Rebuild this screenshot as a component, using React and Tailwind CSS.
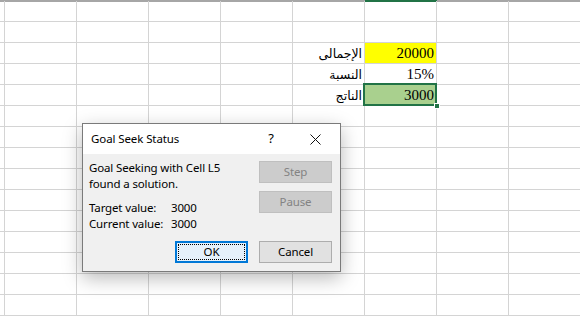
import React from 'react'

const ROWS = 15
const COLS = 9

const CELLS = {
  '2-5': { text: 'الإجمالى', kind: 'label' },
  '2-6': { text: '20000', kind: 'value', bg: 'bg-[#ffff00]' },
  '3-5': { text: 'النسبة', kind: 'label' },
  '3-6': { text: '15%', kind: 'value' },
  '4-5': { text: 'الناتج', kind: 'label' },
  '4-6': { text: '3000', kind: 'value', bg: 'bg-[#a9d08e]', selected: true },
}

function Cell({ r, c }) {
  const cell = CELLS[`${r}-${c}`]
  if (!cell) return <div className="border-r border-b border-[#d4d4d4]" />
  return (
    <div
      className={`relative flex items-center justify-end border-r border-b border-[#d4d4d4] pr-[2px] ${cell.bg || ''}`}
    >
      {cell.kind === 'label' ? (
        <span dir="rtl" className="font-['DejaVu_Sans',sans-serif] text-[12.5px] leading-[21px] text-black">{cell.text}</span>
      ) : (
        <span className="font-['Liberation_Serif',serif] text-[15px] leading-[21px] text-black">{cell.text}</span>
      )}
      {cell.selected && (
        <>
          <div className="absolute -left-[2px] -top-[2px] -right-[1px] -bottom-[1px] border-2 border-[#217346]" />
          <div className="absolute -right-[4px] -bottom-[4px] h-[6px] w-[6px] border border-white bg-[#217346]" />
        </>
      )}
    </div>
  )
}

function Btn({ children, disabled }) {
  return (
    <div
      className={`flex h-[22px] w-[73px] items-center justify-center border text-[11.5px] ${
        disabled ? 'border-[#bfbfbf] bg-[#cccccc] text-[#838383]' : 'border-[#adadad] bg-[#e1e1e1] text-black'
      }`}
    >
      {children}
    </div>
  )
}

export default function App() {
  return (
    <div className="relative h-[318px] w-[580px] overflow-hidden bg-white font-['Noto_Sans',sans-serif]">
      {/* header edge */}
      <div className="grid h-[2px] grid-cols-[365px_72px_1fr]">
        <div className="bg-[#a6a6a6]" />
        <div className="bg-[#217346]" />
        <div className="bg-[#a6a6a6]" />
      </div>

      {/* sheet */}
      <div className="-mt-[1px] grid grid-cols-[5px_repeat(8,72px)] auto-rows-[21px]">
        {Array.from({ length: ROWS }).map((_, r) =>
          Array.from({ length: COLS }).map((_, c) => <Cell key={`${r}-${c}`} r={r} c={c} />)
        )}
      </div>

      {/* Goal Seek dialog */}
      <div className="absolute left-[82px] top-[123px] flex h-[149px] w-[259px] flex-col border border-[#7a7a7a] bg-white shadow-[0_6px_18px_rgba(0,0,0,0.28)]">
        <div className="flex h-[30px] items-center bg-white">
          <span className="pl-[8px] text-[11.5px] tracking-[-0.1px] text-black">Goal Seek Status</span>
          <span className="ml-auto mr-[36px] text-[13px] text-black">?</span>
          <svg className="mr-[19px]" width="11" height="11" viewBox="0 0 11 11">
            <path d="M0.5 0.5L10.5 10.5M10.5 0.5L0.5 10.5" stroke="#111" strokeWidth="1" fill="none" />
          </svg>
        </div>

        <div className="flex flex-1 flex-col bg-[#f0f0f0] pr-[8px] text-[11.5px] tracking-[-0.15px] text-black">
          <div className="flex justify-between">
            <div className="pl-[6px] pt-[6px] leading-[16px]">
              <p>Goal Seeking with Cell L5</p>
              <p>found a solution.</p>
              <div className="mt-[8px] grid grid-cols-[82px_auto]">
                <span>Target value:</span>
                <span>3000</span>
                <span>Current value:</span>
                <span>3000</span>
              </div>
            </div>
            <div className="flex flex-col gap-[8px] pt-[7px]">
              <Btn disabled>Step</Btn>
              <Btn disabled>Pause</Btn>
            </div>
          </div>

          <div className="mt-auto mb-[8px] flex justify-end gap-[11px]">
            <div className="h-[22px] w-[73px] border-2 border-[#0078d7] bg-[#e5f1fb] p-[1px]">
              <div className="flex h-full w-full items-center justify-center border border-dotted border-black text-[11.5px]">
                OK
              </div>
            </div>
            <Btn>Cancel</Btn>
          </div>
        </div>
      </div>
    </div>
  )
}
